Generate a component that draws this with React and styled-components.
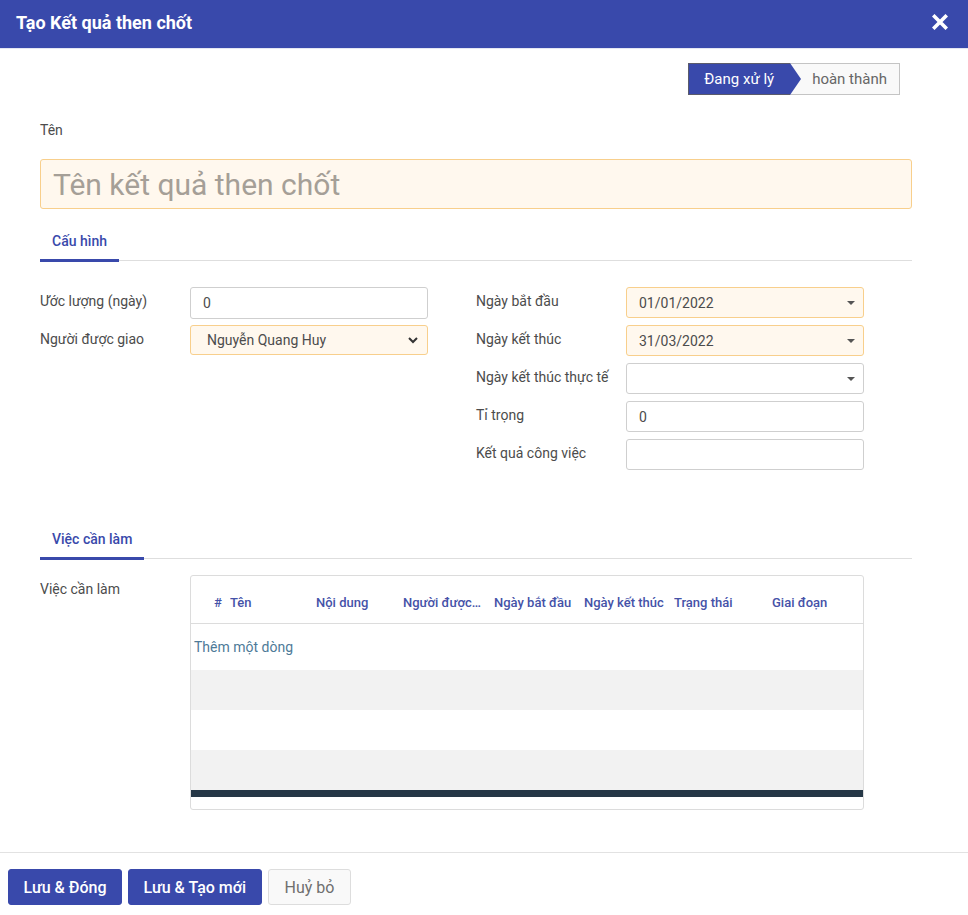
import React from "react";
import styled, { createGlobalStyle } from "styled-components";

const Global = createGlobalStyle`
  html, body { margin: 0; padding: 0; background: #fff; }
  body { font-family: Roboto, "Noto Sans", "Liberation Sans", sans-serif; color: #4c4c4c; }
  * { box-sizing: border-box; }
`;

const BLUE = "#3949ab";

const Dialog = styled.div`
  width: 968px;
  height: 915px;
  display: flex;
  flex-direction: column;
  background: #fff;
`;

const Header = styled.header`
  height: 49px;
  flex: none;
  background: ${BLUE};
  border-bottom: 1px solid #e4e6f2;
  display: flex;
  align-items: center;
  justify-content: space-between;
  padding: 0 20px 0 16px;
`;

const Title = styled.h4`
  margin: 0;
  margin-top: -4px;
  font-size: 18px;
  font-weight: 700;
  color: #fff;
`;

const Close = styled.button`
  border: 0;
  background: none;
  padding: 0;
  margin-top: -4px;
  display: flex;
  cursor: pointer;
`;

const Body = styled.main`
  flex: 1;
  padding: 14px 56px 0 40px;
  display: flex;
  flex-direction: column;
`;

const StatusRow = styled.div`
  display: flex;
  justify-content: flex-end;
  padding-right: 12px;
`;

const StatusBar = styled.div`
  display: flex;
  height: 32px;
  border: 1px solid #c4c4c4;
  background: #f9f9f9;
`;

const Stage = styled.span`
  position: relative;
  display: flex;
  align-items: center;
  font-size: 15px;
  padding: ${(p) => (p.$active ? "0 16px 0 15px" : "0 12px 0 22px")};
  background: ${(p) => (p.$active ? BLUE : "transparent")};
  color: ${(p) => (p.$active ? "#fff" : "#666")};
  margin: ${(p) => (p.$active ? "-1px 0 -1px -1px" : "0")};
  border: ${(p) => (p.$active ? "1px solid #5b5b6b" : "0")};
  border-right: 0;
  z-index: ${(p) => (p.$active ? 1 : 0)};
  &::after {
    content: "";
    display: ${(p) => (p.$active ? "block" : "none")};
    position: absolute;
    top: -1px;
    right: -11px;
    width: 0;
    height: 0;
    border-top: 16px solid transparent;
    border-bottom: 16px solid transparent;
    border-left: 11px solid ${BLUE};
  }
`;

const NameLabel = styled.label`
  display: block;
  margin-top: 27px;
  font-size: 14px;
  color: #4c4c4c;
`;

const NameInput = styled.input`
  margin-top: 21px;
  width: 100%;
  height: 50px;
  border: 1px solid #f8cf8c;
  border-radius: 3px;
  background: #fff8ee;
  padding: 0 12px;
  font-family: inherit;
  font-size: 30px;
  color: #4c4c4c;
  outline: none;
  &::placeholder { color: #a59f97; }
`;

const Tabs = styled.div`
  display: flex;
  border-bottom: 1px solid #dedede;
  margin-top: ${(p) => p.$top}px;
`;

const Tab = styled.span`
  font-size: 14px;
  font-weight: 500;
  color: ${BLUE};
  padding: 0 12px 10px;
  border-bottom: 3px solid ${BLUE};
  margin-bottom: -2px;
`;

const FormGrid = styled.div`
  display: grid;
  grid-template-columns: 1fr 1fr;
  margin-top: 26px;
`;

const Group = styled.div`
  display: grid;
  grid-template-columns: 150px 238px;
  grid-auto-rows: 32px;
  row-gap: 6px;
  align-content: start;
`;

const FieldLabel = styled.label`
  font-size: 14px;
  color: #4c4c4c;
  padding-top: 6px;
  white-space: nowrap;
`;

const Field = styled.div`
  height: ${(p) => (p.$h ? p.$h : 32)}px;
  border: 1px solid ${(p) => (p.$req ? "#f8cf8c" : "#cfcfcf")};
  background: ${(p) => (p.$req ? "#fff8ee" : "#fff")};
  border-radius: 3px;
  display: flex;
  align-items: center;
  justify-content: space-between;
  padding: 0 8px 0 ${(p) => (p.$pad ? p.$pad : 12)}px;
  font-size: 14px;
  color: #4c4c4c;
`;

const Caret = styled.span`
  width: 0;
  height: 0;
  border-left: 4px solid transparent;
  border-right: 4px solid transparent;
  border-top: 4px solid #555;
`;

const TableRow = styled.div`
  display: grid;
  grid-template-columns: 150px 674px;
  margin-top: 16px;
`;

const Table = styled.div`
  border: 1px solid #dcdcdc;
  border-radius: 3px;
  height: 235px;
  display: flex;
  flex-direction: column;
  overflow: hidden;
`;

const THead = styled.div`
  height: 48px;
  flex: none;
  display: flex;
  align-items: center;
  padding: 6px 0 0 23px;
  border-bottom: 1px solid #dcdcdc;
`;

const Th = styled.span`
  width: ${(p) => p.$w}px;
  flex: none;
  font-size: 13px;
  font-weight: 500;
  color: #4552a8;
  white-space: nowrap;
  overflow: hidden;
  text-overflow: ellipsis;
  padding-right: ${(p) => p.$pr || 0}px;
`;

const TRow = styled.div`
  height: ${(p) => p.$h}px;
  flex: none;
  background: ${(p) => (p.$alt ? "#f2f2f2" : "#fff")};
  display: flex;
  align-items: center;
  padding-left: 3px;
`;

const AddLine = styled.a`
  font-size: 14px;
  color: #4e7a98;
  text-decoration: none;
  cursor: pointer;
`;

const TFoot = styled.div`
  height: 7px;
  flex: none;
  background: #253746;
`;

const Footer = styled.footer`
  border-top: 1px solid #e2e2e2;
  padding: 16px 8px 10px;
  display: flex;
  gap: 6px;
`;

const Btn = styled.button`
  height: 36px;
  padding: 0 ${(p) => p.$px}px;
  border-radius: 3px;
  font-family: inherit;
  font-size: 16px;
  border: 1px solid ${(p) => (p.$secondary ? "#dddddd" : BLUE)};
  background: ${(p) => (p.$secondary ? "#f9f9f9" : BLUE)};
  color: ${(p) => (p.$secondary ? "#6f6f6f" : "#fff")};
  font-weight: ${(p) => (p.$secondary ? 400 : 500)};
  cursor: pointer;
`;

const cols = [
  ["#", 16],
  ["Tên", 86],
  ["Nội dung", 87],
  ["Người được giao", 91, 10],
  ["Ngày bắt đầu", 90],
  ["Ngày kết thúc", 90],
  ["Trạng thái", 98],
  ["Giai đoạn", 80],
];

export default function App() {
  return (
    <>
      <Global />
      <Dialog>
        <Header>
          <Title>Tạo Kết quả then chốt</Title>
          <Close aria-label="close">
            <svg width="16" height="16" viewBox="0 0 16 16">
              <path d="M2.5 2.5 L13.5 13.5 M13.5 2.5 L2.5 13.5" stroke="#fff" strokeWidth="3.6" strokeLinecap="square" />
            </svg>
          </Close>
        </Header>
        <Body>
          <StatusRow>
            <StatusBar>
              <Stage $active>Đang xử lý</Stage>
              <Stage>hoàn thành</Stage>
            </StatusBar>
          </StatusRow>
          <NameLabel>Tên</NameLabel>
          <NameInput placeholder="Tên kết quả then chốt" />
          <Tabs $top={24}>
            <Tab>Cấu hình</Tab>
          </Tabs>
          <FormGrid>
            <Group>
              <FieldLabel>Ước lượng (ngày)</FieldLabel>
              <Field>0</Field>
              <FieldLabel>Người được giao</FieldLabel>
              <Field $req $h={30} $pad={16}>
                Nguyễn Quang Huy
                <svg width="12" height="12" viewBox="0 0 12 12">
                  <path d="M2 4 L6 8 L10 4" fill="none" stroke="#333" strokeWidth="2" />
                </svg>
              </Field>
            </Group>
            <Group>
              <FieldLabel>Ngày bắt đầu</FieldLabel>
              <Field $req $h={31}>01/01/2022<Caret /></Field>
              <FieldLabel>Ngày kết thúc</FieldLabel>
              <Field $req $h={31}>31/03/2022<Caret /></Field>
              <FieldLabel>Ngày kết thúc thực tế</FieldLabel>
              <Field $h={31}><span /><Caret /></Field>
              <FieldLabel>Tỉ trọng</FieldLabel>
              <Field $h={31}>0</Field>
              <FieldLabel>Kết quả công việc</FieldLabel>
              <Field $h={31} />
            </Group>
          </FormGrid>
          <Tabs $top={60}>
            <Tab>Việc cần làm</Tab>
          </Tabs>
          <TableRow>
            <FieldLabel>Việc cần làm</FieldLabel>
            <Table>
              <THead>
                {cols.map(([t, w, pr]) => (
                  <Th key={t} $w={w} $pr={pr}>{t}</Th>
                ))}
              </THead>
              <TRow $h={46}><AddLine>Thêm một dòng</AddLine></TRow>
              <TRow $h={40} $alt />
              <TRow $h={40} />
              <TRow $h={40} $alt />
              <TFoot />
            </Table>
          </TableRow>
          <div style={{ flex: 1 }} />
        </Body>
        <Footer>
          <Btn $px={14.5}>Lưu & Đóng</Btn>
          <Btn $px={14.5}>Lưu & Tạo mới</Btn>
          <Btn $secondary $px={16}>Huỷ bỏ</Btn>
        </Footer>
      </Dialog>
    </>
  );
}
